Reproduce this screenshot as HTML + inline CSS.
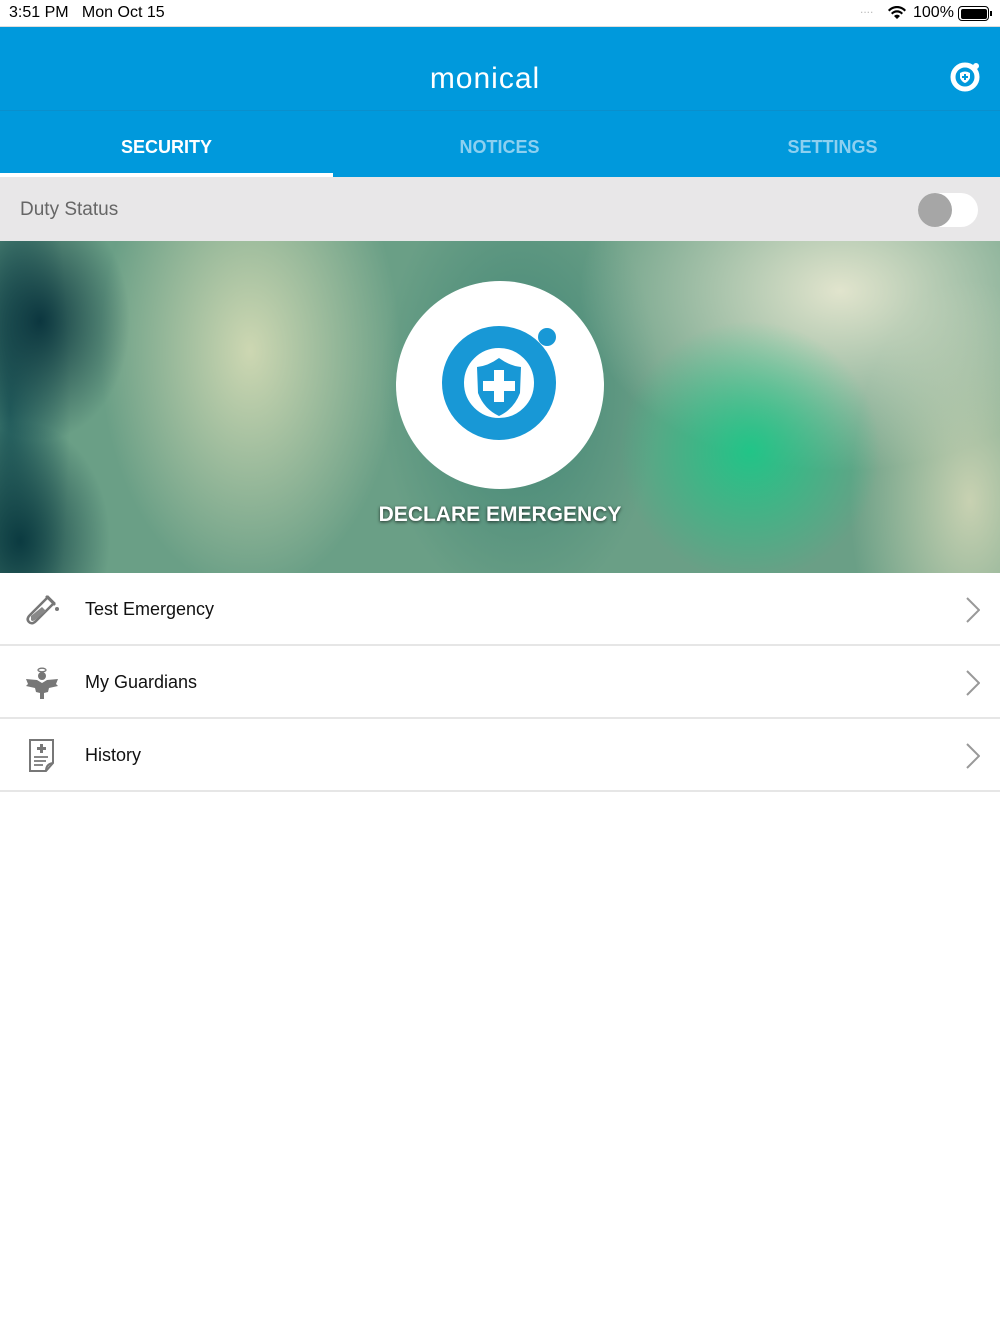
<!DOCTYPE html>
<html><head><meta charset="utf-8"><style>
*{margin:0;padding:0;box-sizing:border-box}
body{width:1000px;height:1334px;background:#fff;font-family:"Liberation Sans",sans-serif;position:relative;overflow:hidden}
.status{position:absolute;top:0;left:0;width:1000px;height:27px;background:#fff;font-size:16px;color:#000;border-bottom:1px solid #ddd}
.nav{position:absolute;top:27px;left:0;width:1000px;height:84px;background:#0099dc;border-bottom:1px solid #0a8fcc}
.title{position:absolute;width:1000px;text-align:center;color:#fff;font-size:30px;letter-spacing:1px}
.tabs{position:absolute;top:111px;left:0;width:1000px;height:66px;background:#0099dc}
.tab{position:absolute;top:26px;width:333px;text-align:center;font-size:18px;font-weight:bold;color:#8dd0f0}
.duty{position:absolute;top:177px;left:0;width:1000px;height:64px;background:#e8e7e8}
.banner{position:absolute;top:241px;left:0;width:1000px;height:332px;overflow:hidden;
background:
radial-gradient(ellipse 90px 120px at 40px 80px,rgba(8,50,60,.95),rgba(8,50,60,0)),
radial-gradient(ellipse 90px 120px at 20px 300px,rgba(8,55,62,.95),rgba(8,55,62,0)),
radial-gradient(ellipse 60px 330px at 10px 170px,rgba(20,80,85,.8),rgba(20,80,85,0)),
radial-gradient(ellipse 130px 130px at 750px 210px,rgba(25,200,135,.9),rgba(25,200,135,0)),
radial-gradient(ellipse 150px 240px at 250px 110px,rgba(205,215,178,1),rgba(205,215,178,0)),
radial-gradient(ellipse 260px 180px at 840px 50px,rgba(225,228,205,1),rgba(225,228,205,0)),
radial-gradient(ellipse 120px 220px at 970px 260px,rgba(205,212,180,.95),rgba(205,212,180,0)),
radial-gradient(ellipse 140px 220px at 520px 150px,rgba(60,130,115,.9),rgba(60,130,115,0)),
#6a9f86}
.circle{position:absolute;left:396px;top:281px;width:208px;height:208px;border-radius:50%;background:#fff}
.decl{position:absolute;top:503px;width:1000px;text-align:center;color:#fff;font-weight:bold;font-size:21px;text-shadow:0 1px 3px rgba(0,0,0,.7)}
.row{position:absolute;left:0;width:1000px;height:73px;border-bottom:2px solid #e6e6e6}
.row .t{position:absolute;left:85px;top:26px;font-size:18px;color:#111}
.row svg.ch{position:absolute;right:20px;top:24px}
.row svg.ic{position:absolute;left:24px;top:20px}
</style></head><body>
<div class="status"><span style="position:absolute;left:9px;top:4px">3:51 PM&nbsp;&nbsp;&nbsp;Mon Oct 15</span>
<span style="position:absolute;left:860px;top:2px;color:#bbb;font-size:12px">....</span>
<svg style="position:absolute;left:888px;top:6px" width="18" height="14" viewBox="0 0 18 14"><path d="M9 13 L6 10 A4 4 0 0 1 12 10Z M3 7 A8 8 0 0 1 15 7 L13.5 8.5 A6 6 0 0 0 4.5 8.5Z M0 4 A12 12 0 0 1 18 4 L16.5 5.5 A10 10 0 0 0 1.5 5.5Z" fill="#000"/></svg>
<span style="position:absolute;left:913px;top:4px">100%</span>
<div style="position:absolute;left:958px;top:6px;width:31px;height:15px;border:1.5px solid #000;border-radius:4px;padding:1.5px"><div style="width:100%;height:100%;background:#000;border-radius:2px"></div></div>
<div style="position:absolute;left:990px;top:11px;width:2px;height:5px;background:#000"></div>
</div>
<div class="nav"><div class="title" style="top:35px;left:-15px">monical</div>
<svg style="position:absolute;left:950px;top:34px" width="32" height="32" viewBox="0 0 32 32"><circle cx="15" cy="16" r="12" fill="none" stroke="#fff" stroke-width="5"/><circle cx="26" cy="5" r="3" fill="#fff"/><path d="M10 12 Q15 9 20 12 L20 17 Q18 21 15 22 Q12 21 10 17Z" fill="#fff"/><path d="M14 13h2v2h2v2h-2v2h-2v-2h-2v-2h2z" fill="#0099dc"/></svg>
</div>
<div class="tabs">
<div class="tab" style="left:0;color:#fff">SECURITY</div>
<div class="tab" style="left:333px">NOTICES</div>
<div class="tab" style="left:666px">SETTINGS</div>
<div style="position:absolute;left:0;top:62px;width:333px;height:4px;background:#fff"></div>
</div>
<div class="duty"><span style="position:absolute;left:20px;top:22px;font-size:19px;color:#666">Duty Status</span>
<div style="position:absolute;left:918px;top:16px;width:60px;height:34px;border-radius:17px;background:#fff"></div>
<div style="position:absolute;left:918px;top:16px;width:34px;height:34px;border-radius:50%;background:#a6a6a6"></div>
</div>
<div class="banner"></div>
<div class="circle"></div>
<svg style="position:absolute;left:436px;top:321px" width="128" height="128" viewBox="0 0 128 128">
<circle cx="63" cy="62" r="46" fill="none" stroke="#1898d6" stroke-width="22"/>
<circle cx="111" cy="16" r="9" fill="#1898d6"/>
<path d="M41 46 Q52 45 63 37 Q74 45 85 46 L84 72 Q78 88 63 95 Q48 88 42 72Z" fill="#1898d6"/>
<path d="M58 49h10v11h11v10h-11v11h-10v-11h-11v-10h11z" fill="#fff"/>
</svg>
<div class="decl">DECLARE EMERGENCY</div>
<div class="row" style="top:573px"><svg class="ic" width="36" height="34" viewBox="0 0 36 34"><path d="M24 4 L30 10 L12 28 Q8 32 5 29 Q2 26 6 22Z" fill="none" stroke="#777" stroke-width="2.5"/><path d="M7 23 L18 14 L22 18 L11 27 Q8 29 7 27Z" fill="#888"/><path d="M22 3 L31 12" stroke="#777" stroke-width="2.5"/><circle cx="33" cy="16" r="2" fill="#777"/></svg><span class="t">Test Emergency</span><svg class="ch" width="14" height="26" viewBox="0 0 14 26"><path d="M1 1 L13 13 L1 25" fill="none" stroke="#999" stroke-width="2"/></svg></div>
<div class="row" style="top:646px"><svg class="ic" width="36" height="36" viewBox="0 0 36 36"><ellipse cx="18" cy="4" rx="4" ry="1.8" fill="none" stroke="#777" stroke-width="1.3"/><circle cx="18" cy="10" r="4" fill="#777"/><path d="M2 13 L13 14 L18 17 L23 14 L34 13 L32 18 L34 20 L25 22 L24 26 L20 27 L20 33 L16 33 L16 27 L12 26 L11 22 L2 20 L4 18Z" fill="#777"/></svg><span class="t">My Guardians</span><svg class="ch" width="14" height="26" viewBox="0 0 14 26"><path d="M1 1 L13 13 L1 25" fill="none" stroke="#999" stroke-width="2"/></svg></div>
<div class="row" style="top:719px"><svg class="ic" width="36" height="36" viewBox="0 0 36 36"><path d="M6 1 H29 V24 L22 32 H6Z" fill="none" stroke="#777" stroke-width="2"/><path d="M22 32 Q22 25 29 24" fill="none" stroke="#777" stroke-width="2"/><path d="M16 5h3v3h3v3h-3v3h-3v-3h-3v-3h3z" fill="#777"/><path d="M10 18h14M10 22h12M10 26h9" stroke="#777" stroke-width="1.8"/></svg><span class="t">History</span><svg class="ch" width="14" height="26" viewBox="0 0 14 26"><path d="M1 1 L13 13 L1 25" fill="none" stroke="#999" stroke-width="2"/></svg></div>
</body></html>
